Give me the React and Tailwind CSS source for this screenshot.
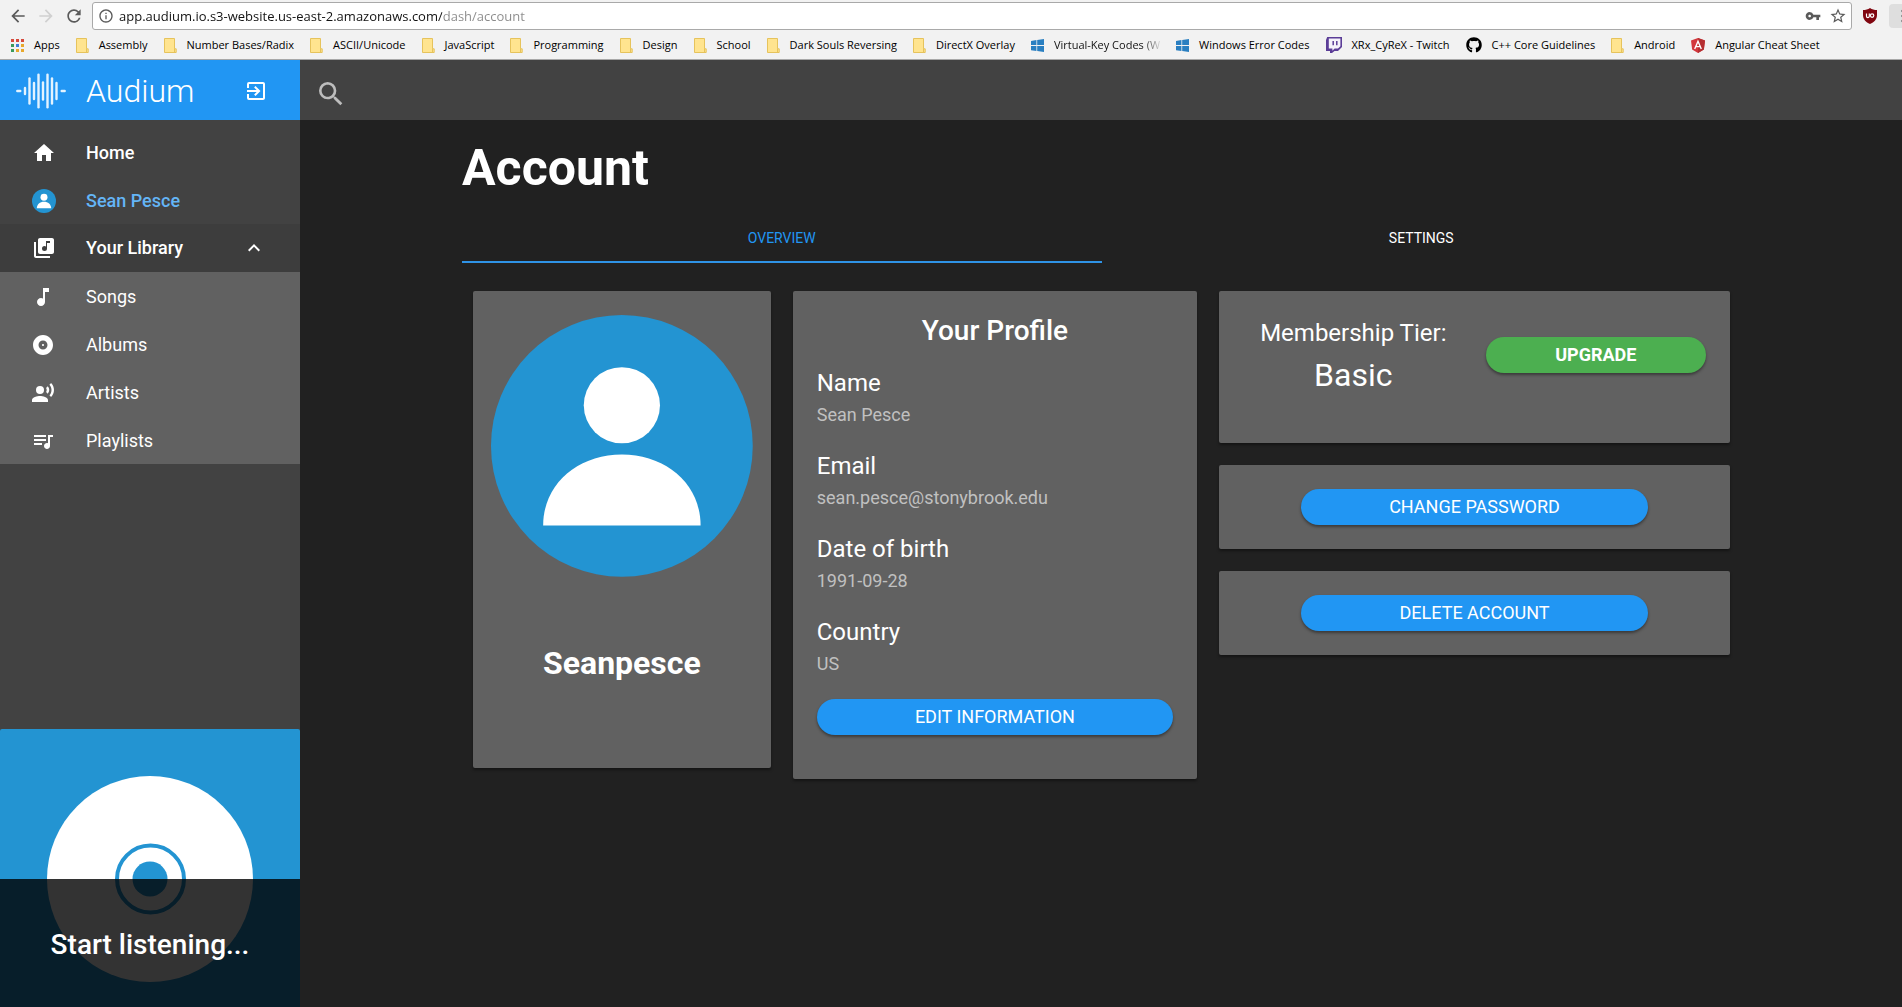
import React from "react";
import {
  MdArrowBack,
  MdArrowForward,
  MdRefresh,
  MdInfoOutline,
  MdVpnKey,
  MdStarBorder,
  MdExitToApp,
  MdSearch,
  MdHome,
  MdLibraryMusic,
  MdMusicNote,
  MdAlbum,
  MdRecordVoiceOver,
  MdQueueMusic,
  MdKeyboardArrowUp,
  MdMoreVert,
} from "react-icons/md";
import { FaGithub } from "react-icons/fa";

function FolderIcon() {
  return (
    <svg viewBox="0 0 13 15" className="h-[15px] w-[13px] shrink-0" aria-hidden="true">
      <path d="M.5.5h10v10.3h1.7v3.7H.5z" fill="#ffe48f" stroke="#e6c35c" />
      <path d="M10.5 14v-3.2" stroke="#e6c35c" />
    </svg>
  );
}

function WindowsIcon() {
  return (
    <svg viewBox="0 0 13 13" className="h-[13px] w-[13px] shrink-0" aria-hidden="true">
      <path
        d="M0 1.9 5.4 1.1V6H0zM6.2 1 13 0v6H6.2zM0 6.9h5.4v5L0 11.2zM6.2 6.9H13V13l-6.8-1z"
        fill="#2a7fc1"
      />
    </svg>
  );
}

function TwitchIcon() {
  return (
    <svg viewBox="0 0 16 16" className="h-4 w-4 shrink-0" aria-hidden="true">
      <path d="M1.2 0H16v10l-4 4H8.5L6 16H4v-2H0V3z" fill="#5b3d97" />
      <path d="M2.8 1.5h11.6v7.8L12 11.6H8.6l-2.2 2.1v-2.1H2.8z" fill="#f4f1fa" />
      <path d="M7.2 4v4.2M10.8 4v4.2" stroke="#5b3d97" strokeWidth="1.5" />
    </svg>
  );
}

function AngularIcon() {
  return (
    <svg viewBox="0 0 14 15" className="h-[15px] w-[14px] shrink-0" aria-hidden="true">
      <path d="M7 0l7 2.4-1.1 9L7 15l-5.9-3.6L0 2.4z" fill="#d3373c" />
      <path d="M7 0l7 2.4-1.1 9L7 15z" fill="#b52e31" />
      <path d="M3.7 11 7 3.2l3.3 7.8M5 8.6h4" fill="none" stroke="#fff" strokeWidth="1.4" />
    </svg>
  );
}

function AppsIcon() {
  const colors = ["#d64a3c", "#d64a3c", "#d64a3c", "#3a9a5b", "#3f7fd6", "#e8a82c", "#3a9a5b", "#e8a82c", "#e8a82c"];
  return (
    <svg viewBox="0 0 13 13" className="h-[13px] w-[13px] shrink-0" aria-hidden="true">
      {colors.map((c, i) => (
        <rect key={i} x={(i % 3) * 5} y={Math.floor(i / 3) * 5} width="3" height="3" fill={c} />
      ))}
    </svg>
  );
}

const BOOKMARKS = [
  { label: "Assembly" },
  { label: "Number Bases/Radix" },
  { label: "ASCII/Unicode" },
  { label: "JavaScript" },
  { label: "Programming" },
  { label: "Design" },
  { label: "School" },
  { label: "Dark Souls Reversing" },
  { label: "DirectX Overlay" },
  { label: "Virtual-Key Codes (W", icon: <WindowsIcon />, faded: true },
  { label: "Windows Error Codes", icon: <WindowsIcon /> },
  { label: "XRx_CyReX - Twitch", icon: <TwitchIcon /> },
  { label: "C++ Core Guidelines", icon: <FaGithub className="h-4 w-4 shrink-0" /> },
  { label: "Android" },
  { label: "Angular Cheat Sheet", icon: <AngularIcon /> },
];

function BrowserChrome() {
  return (
    <div className="h-[60px] shrink-0 overflow-hidden border-b border-[#a8a8a8] bg-[#f2f2f2] text-black font-['Open_Sans','Noto_Sans',sans-serif]">
      <div className="flex h-[30px] items-center pt-[2px]">
        <div className="flex w-[92px] shrink-0 items-center gap-2 pl-2">
          <button aria-label="Back"><MdArrowBack className="size-5 text-[#5a5a5a]" /></button>
          <button aria-label="Forward"><MdArrowForward className="size-5 text-[#d0d0d0]" /></button>
          <button aria-label="Reload"><MdRefresh className="size-5 text-[#5a5a5a]" /></button>
        </div>
        <div className="flex h-7 min-w-0 flex-1 items-center rounded-[3px] border border-[#a9a9a9] bg-white pl-[5px] pr-1">
          <MdInfoOutline className="size-4 shrink-0 text-[#5a5a5a]" />
          <input
            aria-label="Address"
            defaultValue="app.audium.io.s3-website.us-east-2.amazonaws.com/dash/account"
            className="ml-[5px] min-w-0 flex-1 bg-[linear-gradient(to_right,#111_323px,#8a8a8a_323px)] bg-clip-text text-[13px] leading-5 text-transparent outline-none"
          />
          <MdVpnKey className="size-4 text-[#5a5a5a]" />
          <button aria-label="Bookmark this page" className="ml-2"><MdStarBorder className="size-[18px] text-[#5a5a5a]" /></button>
        </div>
        <button aria-label="uBlock Origin" className="ml-[11px]">
          <svg viewBox="0 0 14 16" className="h-4 w-[14px]" aria-hidden="true">
            <path d="M7 0c2 1.4 4.5 2 7 2v5c0 4.5-2.8 7-7 9-4.2-2-7-4.5-7-9V2c2.5 0 5-.6 7-2z" fill="#800610" />
            <path d="M3.5 5.5v2.7a1.4 1.4 0 0 0 2.8 0V5.5" fill="none" stroke="#fff" strokeWidth="1.2" />
            <circle cx="9.1" cy="7.6" r="1.7" fill="none" stroke="#fff" strokeWidth="1.2" />
          </svg>
        </button>
        <button aria-label="Browser menu" className="ml-3 flex h-6 w-[13px] items-center overflow-hidden rounded-l-sm bg-[#dedede] pl-1">
          <MdMoreVert className="size-5 shrink-0 text-[#5a5a5a]" />
        </button>
      </div>
      <nav aria-label="Bookmarks" className="flex h-[30px] items-center gap-4 pl-[11px] text-[11px] whitespace-nowrap">
        <a href="#apps" className="flex items-center gap-[10px]"><AppsIcon />Apps</a>
        {BOOKMARKS.map((b) => (
          <a key={b.label} href="#bookmark" className="flex items-center gap-[10px]">
            {b.icon || <FolderIcon />}
            {b.faded ? (
              <span className="bg-[linear-gradient(to_right,#111_84%,#d8d8d8)] bg-clip-text text-transparent">{b.label}</span>
            ) : (
              b.label
            )}
          </a>
        ))}
      </nav>
    </div>
  );
}

function Logo() {
  const bars = [
    [9, 14, 22],
    [13.5, 4.5, 31.5],
    [18, 9, 27],
    [22.5, 0.8, 35.2],
    [27, 8.5, 27.5],
    [31.5, 0.8, 35.2],
    [36, 4.5, 31.5],
    [40.5, 9, 27],
  ];
  return (
    <svg viewBox="0 0 50 36" className="h-9 w-[50px]" aria-hidden="true">
      <g stroke="#e3f3ff" strokeWidth="2.4" strokeLinecap="round">
        <path d="M1.3 18h3M45.7 18h3" />
        {bars.map(([x, a, b]) => (
          <path key={x} d={`M${x} ${a + 1}V${b - 1}`} />
        ))}
      </g>
    </svg>
  );
}

function Avatar({ className }) {
  return (
    <svg viewBox="0 0 261 261" className={className} aria-hidden="true">
      <circle cx="130.5" cy="130.5" r="130.5" fill="#2394d2" />
      <circle cx="130.5" cy="90" r="38" fill="#fff" />
      <path d="M52 210c0-42 35-71 78.500-71s78.500 29 78.500 71z" fill="#fff" />
    </svg>
  );
}

const LIBRARY = [
  { label: "Songs", Icon: MdMusicNote },
  { label: "Albums", Icon: MdAlbum },
  { label: "Artists", Icon: MdRecordVoiceOver },
  { label: "Playlists", Icon: MdQueueMusic },
];

function Sidebar() {
  return (
    <aside className="flex w-[300px] shrink-0 flex-col bg-[#424242]">
      <header className="flex h-[60px] shrink-0 items-center bg-[#2196f3] pt-0.5 pl-4">
        <Logo />
        <span className="ml-5 text-[32px] font-light">Audium</span>
        <button aria-label="Log out" className="mr-8 ml-auto"><MdExitToApp className="size-6" /></button>
      </header>
      <nav aria-label="Main" className="pt-2 text-lg font-medium">
        <a href="#home" className="flex h-12 items-center gap-[30px] pt-0.5 pl-8">
          <MdHome className="size-6" />Home
        </a>
        <a href="#profile" className="flex h-12 items-center gap-[30px] pt-0.5 pl-8 text-[#64b5f6]">
          <Avatar className="size-6" />Sean Pesce
        </a>
        <button className="flex h-12 w-full items-center gap-[30px] bg-[#3d3d3d] pr-[34px] pl-8">
          <MdLibraryMusic className="size-6" />Your Library
          <MdKeyboardArrowUp className="ml-auto size-6" />
        </button>
        <div className="bg-[#616161] font-normal">
          {LIBRARY.map(({ label, Icon }) => (
            <a key={label} href="#library" className="flex h-12 items-center gap-[31px] pt-0.5 pl-[31px]">
              <Icon className="size-6" />{label}
            </a>
          ))}
        </div>
      </nav>
      <section className="relative mt-auto h-[278px] shrink-0 overflow-hidden rounded-t-xs bg-[#2394d2]">
        <svg viewBox="0 0 300 300" className="w-full" aria-hidden="true">
          <circle cx="150" cy="150" r="103" fill="#fff" />
          <circle cx="150.5" cy="150" r="33.5" fill="none" stroke="#2394d2" strokeWidth="4" />
          <circle cx="150" cy="150" r="17.5" fill="#2394d2" />
        </svg>
        <div className="absolute inset-x-0 top-[150px] bottom-0 bg-black/80 pt-[45px] text-center text-[28px] leading-[42px] font-medium">
          Start listening...
        </div>
      </section>
    </aside>
  );
}

const CARD = "rounded-xs bg-[#616161] shadow-[0_2px_3px_rgba(0,0,0,0.4)]";
const PILL = "block h-9 rounded-full text-lg shadow-[0_2px_3px_rgba(0,0,0,0.4)]";

const PROFILE = [
  ["Name", "Sean Pesce"],
  ["Email", "sean.pesce@stonybrook.edu"],
  ["Date of birth", "1991-09-28"],
  ["Country", "US"],
];

function Account() {
  return (
    <div className="mx-auto max-w-[1280px] pt-4 pl-px">
      <h1 className="text-[50px] leading-[64px] font-bold">Account</h1>
      <div role="tablist" className="mt-[15px] grid grid-cols-2 text-sm">
        <button role="tab" aria-selected="true" className="h-12 border-b-2 border-[#2f93e6] text-[#2196f3]">OVERVIEW</button>
        <button role="tab" aria-selected="false" className="h-12 border-b-2 border-transparent">SETTINGS</button>
      </div>
      <div className="mt-7 grid grid-cols-12 items-start gap-[22px] px-[11px]">
        <section className={`${CARD} col-span-3 px-[18px] pt-6 pb-[85px]`}>
          <Avatar className="w-full" />
          <h2 className="mt-[66px] text-center text-[32px] leading-10 font-bold">Seanpesce</h2>
        </section>
        <section className={`${CARD} col-span-4 px-6 pt-6 pb-11`}>
          <h2 className="text-center text-[28px] leading-8 font-medium">Your Profile</h2>
          <dl className="my-5 flex flex-col gap-5">
            {PROFILE.map(([k, v]) => (
              <div key={k}>
                <dt className="text-2xl leading-8">{k}</dt>
                <dd className="text-lg leading-[31px] text-[#c0c0c0]">{v}</dd>
              </div>
            ))}
          </dl>
          <button className={`${PILL} w-full bg-[#2196f3]`}>EDIT INFORMATION</button>
        </section>
        <div className="col-span-5 flex flex-col gap-[22px]">
          <section className={`${CARD} grid grid-cols-2 items-start gap-[22px] px-6 pt-6 pb-11`}>
            <p className="text-center text-2xl leading-9">
              Membership Tier:
              <span className="block text-[32px] leading-[48px]">Basic</span>
            </p>
            <button className={`${PILL} mt-[22px] bg-[#4caf50] font-bold`}>UPGRADE</button>
          </section>
          <section className={`${CARD} p-6`}>
            <button className={`${PILL} mx-auto w-3/4 bg-[#2196f3]`}>CHANGE PASSWORD</button>
          </section>
          <section className={`${CARD} p-6`}>
            <button className={`${PILL} mx-auto w-3/4 bg-[#2196f3]`}>DELETE ACCOUNT</button>
          </section>
        </div>
      </div>
    </div>
  );
}

export default function App() {
  return (
    <div className="flex h-screen flex-col bg-[#212121] text-white font-[Roboto,'Liberation_Sans',sans-serif]">
      <BrowserChrome />
      <div className="flex min-h-0 flex-1">
        <Sidebar />
        <main className="min-w-0 flex-1">
          <div className="h-[60px] bg-[#424242] pt-[18px] pl-[15px]">
            <button aria-label="Search" className="block"><MdSearch className="size-8 text-[#bdbdbd]" /></button>
          </div>
          <Account />
        </main>
      </div>
    </div>
  );
}
